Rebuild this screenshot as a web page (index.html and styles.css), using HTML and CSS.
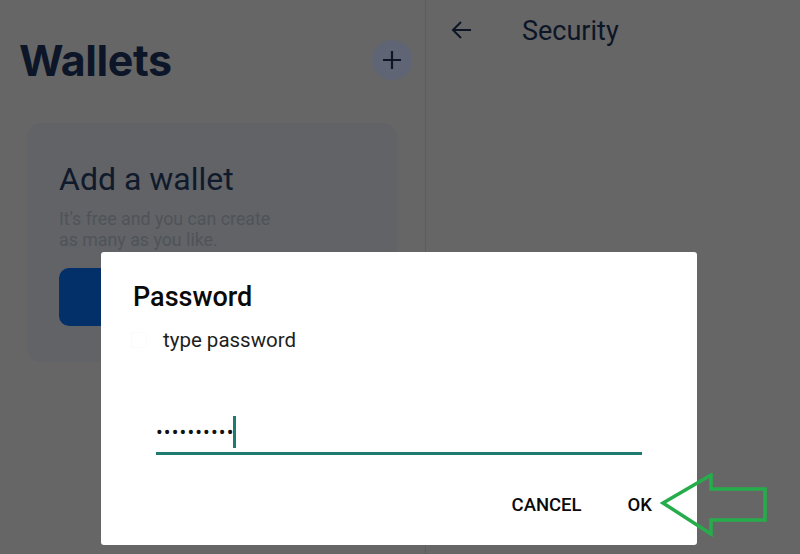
FILE: index.html
```html
<!DOCTYPE html>
<html lang="en">

<head>
    <meta charset="UTF-8" />
    <title>Security</title>
    <link rel="stylesheet" href="styles.css">
</head>

<body>
    <div class="app">
        <div class="wallets">
            <div class="wallets-head">
                <h1>Wallets</h1>
                <span class="add-btn">
                    <svg width="20" height="20" viewBox="0 0 20 20"><path d="M10 1v18M1 10h18" stroke="#0d1526" stroke-width="2.2" fill="none"/></svg>
                </span>
            </div>
            <div class="add-card">
                <h2>Add a wallet</h2>
                <p>It's free and you can create<br>as many as you like.</p>
                <div class="add-card-btn"></div>
            </div>
        </div>
        <div class="security">
            <div class="security-head">
                <svg width="24" height="24" viewBox="0 0 24 24"><path d="M21 12H4M11 4l-8 8 8 8" stroke="#0d1526" stroke-width="2" fill="none"/></svg>
                <span class="title">Security</span>
            </div>
        </div>
    </div>

    <div class="dialog">
        <h3>Password</h3>
        <div class="dialog-label"><span class="check"></span>type password</div>
        <div class="field">
            <span class="dots">••••••••••</span><span class="caret"></span>
        </div>
        <div class="actions">
            <span class="act">CANCEL</span>
            <span class="act">OK</span>
        </div>
    </div>

    <svg class="pointer" width="110" height="66" viewBox="0 0 110 66">
        <path d="M3 30 L51 2 L51 16 L105 16 L105 47 L51 47 L51 61 Z" stroke="#26ad4b" stroke-width="3.5" fill="none" stroke-linejoin="miter"/>
    </svg>
</body>
</html>
```

FILE: styles.css
```css
body {
    margin: 0;
    width: 800px;
    height: 554px;
    overflow: hidden;
    background: #666666;
    font-family: Roboto, "Noto Sans", sans-serif;
    position: relative;
}

.app {
    display: flex;
    height: 554px;
}

.wallets {
    width: 425px;
    border-right: 1px solid #5c5c5c;
}

.wallets-head {
    display: flex;
    justify-content: space-between;
    align-items: center;
    padding: 34px 13px 0 19px;
    height: 52px;
}

.wallets-head h1 {
    margin: 0;
    font-family: Inter, sans-serif;
    font-weight: 700;
    font-size: 43px;
    letter-spacing: -0.4px;
    color: #0c1628;
}

.add-btn {
    width: 40px;
    height: 40px;
    border-radius: 50%;
    background: #5f6574;
    display: flex;
    align-items: center;
    justify-content: center;
}

.add-card {
    margin: 37px 28px 0 27px;
    height: 239px;
    border-radius: 14px;
    background: #616366;
    padding: 0 32px;
    box-sizing: border-box;
    overflow: hidden;
}

.add-card h2 {
    margin: 0;
    padding-top: 37px;
    font-weight: 400;
    font-size: 32px;
    color: #101a2b;
}

.add-card p {
    margin: 10px 0 0;
    font-size: 17.8px;
    line-height: 21px;
    color: #4f5359;
}

.add-card-btn {
    margin-top: 18px;
    height: 58px;
    width: 200px;
    border-radius: 10px;
    background: #04306a;
}

.security {
    flex: 1;
}

.security-head {
    display: flex;
    align-items: center;
    height: 62px;
    padding-left: 24px;
}

.security-head svg {
    margin-top: -2px;
}

.security-head .title {
    margin-left: 48px;
    font-size: 27px;
    color: #0d1526;
}

.dialog {
    position: absolute;
    left: 101px;
    top: 252px;
    width: 596px;
    height: 293px;
    background: #fff;
    border-radius: 3px;
    box-sizing: border-box;
    padding: 29px 45px 0 32px;
}

.dialog h3 {
    margin: 0;
    font-weight: 500;
    font-size: 27px;
    color: #0a0a0a;
}

.dialog-label {
    display: flex;
    align-items: center;
    margin-top: 15px;
    font-size: 20.5px;
    color: #1e1e1e;
}

.check {
    width: 14px;
    height: 14px;
    margin: 0 16px 0 -2px;
    border: 1px solid #fbfbfb;
}

.field {
    margin: 60px 10px 0 23px;
    height: 43px;
    border-bottom: 3px solid #1f7a70;
    display: flex;
    align-items: center;
    box-sizing: border-box;
}

.dots {
    font-size: 20px;
    letter-spacing: 1.1px;
    color: #111;
}

.caret {
    width: 3px;
    height: 32px;
    margin-left: -1px;
    background: #1f7a70;
}

.actions {
    display: flex;
    justify-content: flex-end;
    gap: 46px;
    margin-top: 39px;
}

.act {
    font-size: 18.5px;
    font-weight: 500;
    color: #0a0a0a;
}

.pointer {
    position: absolute;
    left: 660px;
    top: 473px;
}
```
